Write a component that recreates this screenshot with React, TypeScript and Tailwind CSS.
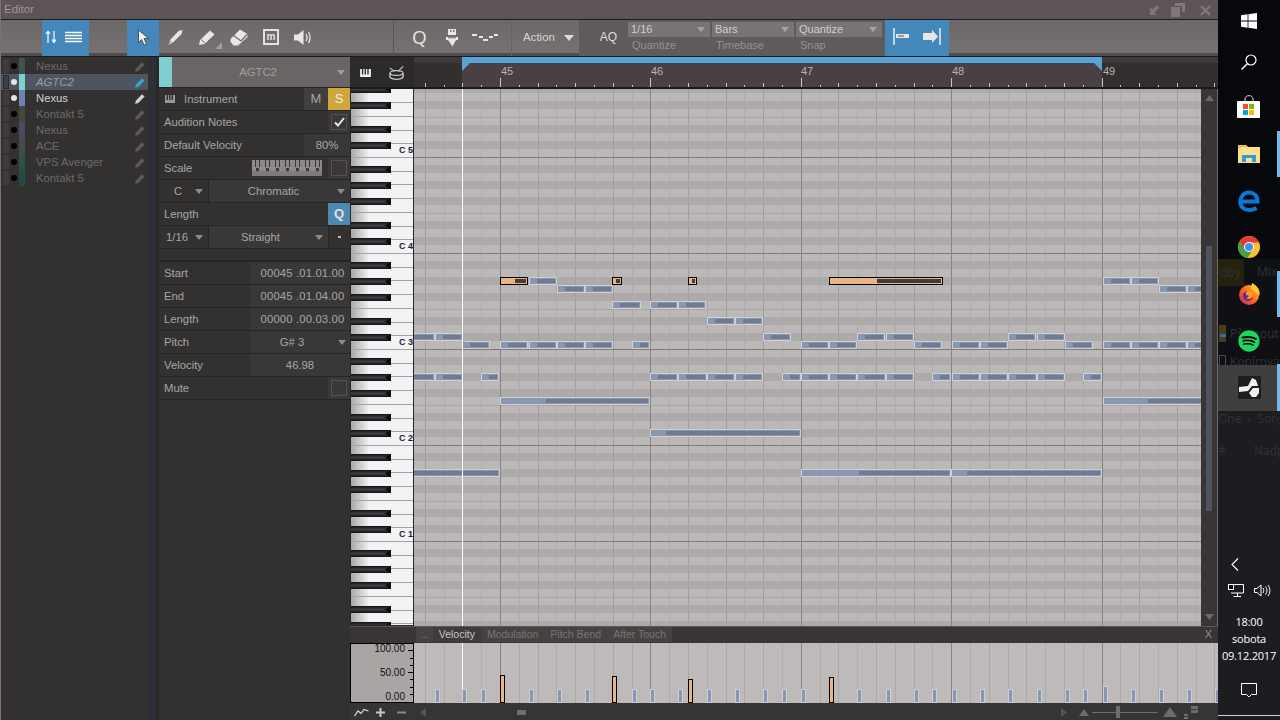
import React from "react";
import { FaSpotify } from "react-icons/fa";

const F = "font-['Liberation_Sans',Arial,sans-serif]";

type N = [number, number, number, number?];
// y, x, w, light width
const notes: N[] = [
  [277, 529, 28], [277, 1103, 28], [277, 1131, 28],
  [285, 557, 28], [285, 585, 28], [285, 1159, 28], [285, 1187, 28],
  [301, 612, 29], [301, 650, 28], [301, 678, 28],
  [317, 707, 28], [317, 735, 28],
  [333, 405, 30, 0], [333, 435, 28], [333, 763, 28], [333, 857, 28], [333, 886, 28], [333, 1008, 28], [333, 1037, 28],
  [341, 462, 28], [341, 500, 28], [341, 529, 28], [341, 557, 28], [341, 585, 28], [341, 632, 18], [341, 801, 28], [341, 829, 28], [341, 914, 28], [341, 952, 28], [341, 980, 28], [341, 1065, 28], [341, 1103, 28], [341, 1131, 28], [341, 1159, 28], [341, 1187, 28],
  [373, 405, 30, 0], [373, 435, 28], [373, 481, 18], [373, 650, 28], [373, 678, 29], [373, 707, 28], [373, 735, 28], [373, 782, 19], [373, 801, 28], [373, 829, 28], [373, 857, 29], [373, 886, 28], [373, 932, 19], [373, 952, 28], [373, 980, 28], [373, 1008, 29], [373, 1037, 28], [373, 1083, 19],
  [397, 500, 150, 45], [397, 1103, 150, 44],
  [429, 650, 151, 15],
  [469, 405, 95, 0], [469, 801, 150, 57], [469, 951, 151, 15],
];
const orange: N[] = [
  [277, 500, 28, 14], [277, 612, 10, 3], [277, 688, 9, 3], [277, 829, 114, 47],
];

const octaves = [61, 157, 253, 349, 445, 541, 637];
const darkRows = octaves.flatMap((l) => [8, 24, 40, 64, 80].map((d) => l + d)).filter((y) => y >= 81 && y < 625);
const efLines = octaves.map((l) => l + 56).filter((y) => y > 89 && y < 625);
const cLines = octaves.filter((y) => y > 89 && y < 625);
const ticks: { x: number; k: number; bar: number }[] = [];
for (let i = -4; i < 42; i++) {
  const x = Math.round(500 + 18.8 * i);
  const bar = ((i % 8) + 8) % 8 === 0 ? 2 : ((i % 2) + 2) % 2 === 0 ? 1 : 0;
  ticks.push({ x, k: i, bar });
}
const whiteLines: number[] = [];
for (let k = -5; k < 40; k++) {
  const y = Math.round(157 + (96 / 7) * k);
  if (y > 89 && y < 626) whiteLines.push(y);
}
const starts = [435, 462, 481, 500, 529, 557, 585, 612, 632, 650, 678, 688, 707, 735, 763, 782, 801, 829, 857, 886, 914, 932, 952, 980, 1008, 1037, 1065, 1083, 1103, 1131, 1159, 1187, 1215];
const orangeVel: Record<number, number> = { 500: 28, 612: 27, 688: 24, 829: 26 };

function Tri({ c = "#8f8b8b", w = 10, h = 6, className = "" }: { c?: string; w?: number; h?: number; className?: string }) {
  return (
    <svg width={w} height={h} viewBox="0 0 10 6" className={className} preserveAspectRatio="none">
      <path d="M0 0H10L5 6Z" fill={c} />
    </svg>
  );
}

function Pencil({ c }: { c: string }) {
  return (
    <svg width="10" height="11" viewBox="0 0 10 11">
      <path d="M0 11L1 7.5 7 1.2 9.6 3.6 3.4 10Z" fill={c} />
    </svg>
  );
}

function Track({ name, color, active, sel }: { name: string; color: string; active?: boolean; sel?: boolean }) {
  return (
    <div className={`flex h-4 items-center ${sel ? "bg-[#4f5560]" : ""}`}>
      <div className={`ml-[2px] h-[14px] w-[6px] ${sel ? "border border-[#2b2a2a] bg-[#3b3f47]" : "bg-[#3d3b3b]"}`} />
      <div className={`ml-[2px] h-[6px] w-[6px] rounded-full ${active ? "bg-[#e4e4e4]" : "bg-black"}`} />
      <div className="ml-[2px] h-4 w-[6px]" style={{ background: color }} />
      <div className={`ml-[11px] flex-1 text-[11.3px] ${sel ? "italic text-[#9a9ea6]" : active ? "text-[#d2d2d2]" : "text-[#6c6968]"}`}>{name}</div>
      <div className="mr-[3px]">
        <Pencil c={sel ? "#35a3cc" : active ? "#d0d0d0" : "#5e5b5a"} />
      </div>
    </div>
  );
}

function Row({ children, h = "h-[23px]" }: { children: React.ReactNode; h?: string }) {
  return <div className={`flex ${h} items-stretch border-b border-[#272524] text-[11.3px] text-[#a6a6a6]`}>{children}</div>;
}
function Label({ children }: { children: React.ReactNode }) {
  return <div className="flex flex-1 items-center pl-[5px]">{children}</div>;
}
function Val({ children, w, tri, extra = "" }: { children?: React.ReactNode; w: string; tri?: boolean; extra?: string }) {
  return (
    <div className={`relative flex ${w} items-center justify-center bg-[#3a3837] ${tri ? "pr-[16px]" : ""} ${extra}`}>
      {children}
      {tri && <Tri className="absolute right-[4px] top-[9px]" w={8} h={5} />}
    </div>
  );
}
function Check({ on }: { on?: boolean }) {
  return (
    <div className="flex w-[22px] items-center justify-center bg-[#3a3837]">
      <div className="flex h-4 w-4 items-center justify-center border border-[#545150]">
        {on && (
          <svg width="11" height="10" viewBox="0 0 11 10">
            <path d="M1 5.5L4 8.5 10 1" fill="none" stroke="#e8e8e8" strokeWidth="2" />
          </svg>
        )}
      </div>
    </div>
  );
}

function Drop({ v, l, w }: { v: string; l: string; w: string }) {
  return (
    <div className={`flex ${w} flex-col`}>
      <div className="flex h-[15px] items-center justify-between bg-[#797474] pl-[3px] pr-[5px] text-[11px] text-[#d0cdcd]">
        {v}
        <Tri c="#a7a3a3" w={8} h={5} />
      </div>
      <div className="pl-[4px] text-[11px] text-[#969191]">{l}</div>
    </div>
  );
}

function Tool({ children, w = "w-8", blue }: { children: React.ReactNode; w?: string; blue?: boolean }) {
  return <div className={`flex ${w} items-center justify-center pb-[2px] ${blue ? "bg-[#4488bb]" : ""}`}>{children}</div>;
}

function Toolbar() {
  const c = "#e6e6e6";
  return (
    <div className={`flex h-[37px] shrink-0 border-b border-[#1c1a1a] bg-linear-to-b from-[#6d6868] to-[#777373] shadow-[inset_0_-3px_0_#514d4d] ${F}`}>
      <div className="ml-[41px] flex w-[47px] items-center gap-[8px] bg-[#4488bb] pb-[2px] pl-[3px]">
        <svg width="12" height="14" viewBox="0 0 12 14"><path d="M3 13V2M1 4L3 1.500 5 4M9 1V12M7 9.500L9 12.500 11 9.500" fill="none" stroke="#fff" strokeWidth="1.200" /></svg>
        <svg width="17" height="12" viewBox="0 0 17 12"><path d="M0 1.500H17M0 4.500H17M0 7.500H17M0 10.500H17" stroke="#fff" strokeWidth="1.600" /></svg>
      </div>
      <div className="w-[38px]" />
      <Tool blue>
        <svg width="13" height="17" viewBox="0 0 13 17"><path d="M1.500 1V13.500L4.500 10.500 7 16 9.500 15 7 9.500H11.500Z" fill="#f0f0f0" stroke="#3b3b3b" strokeWidth="0.800" /></svg>
      </Tool>
      <Tool>
        <svg width="17" height="17" viewBox="0 0 16 17"><path d="M0.500 16.500L3 10.500 11 2 15 1 14 5 6 13Z" fill={c} /><path d="M0.500 16.500L4 12" stroke="#6f6a6a" strokeWidth="0.800" /></svg>
      </Tool>
      <Tool>
        <div className="relative">
          <svg width="18" height="17" viewBox="0 0 18 17"><path d="M1 16L2 11 12 1.500 16.500 5.500 6.500 15Z" fill={c} /><path d="M3 10.500L7.500 14.500" stroke="#77716f" /></svg>
          <svg width="7" height="7" viewBox="0 0 7 7" className="absolute left-[17px] top-[13px]"><path d="M7 0V7H0Z" fill="#a09c9c" /></svg>
        </div>
      </Tool>
      <Tool>
        <svg width="18" height="17" viewBox="0 0 18 17"><path d="M0.500 10L10 0.500 17.500 5 17.500 8 8 16.500 3.500 16.500 0.500 13Z" fill={c} /><path d="M3.500 6.500L11 12 M11 12L17.500 5" fill="none" stroke="#6f6a6a" strokeWidth="1.200" /></svg>
      </Tool>
      <Tool>
        <div className="flex h-4 w-4 items-center justify-center border-2 border-[#e2e2e2] text-[10px] font-bold leading-none text-[#e2e2e2]">m</div>
      </Tool>
      <Tool>
        <svg width="20" height="17" viewBox="0 0 20 17"><path d="M1 5.500H5L10.500 1V16L5 11.500H1Z" fill={c} /><path d="M13 5C14.300 7 14.300 10 13 12M15.500 3C17.500 6 17.500 11 15.500 14" fill="none" stroke={c} strokeWidth="1.300" /></svg>
      </Tool>
      <div className="w-[75px] border-r border-[#5a5656]" />
      <Tool w="w-[51px]">
        <div className="font-['Open_Sans',sans-serif] text-[19px] font-medium leading-none text-[#e6e6e6]">Q</div>
      </Tool>
      <Tool w="w-[14px]">
        <svg width="14" height="19" viewBox="0 0 14 19" className="shrink-0"><path d="M3 1H11V7H3ZM1 9H13V12H11L7.500 18.500 3 12H1Z" fill={c} /><path d="M5 3H6.500M8 3H9.500" stroke="#555" strokeWidth="1.500" /><path d="M3 9.800H11" stroke="#6f6a6a" /></svg>
      </Tool>
      <Tool w="w-[52px]">
        <svg width="26" height="9" viewBox="0 0 26 9"><path d="M0 1H5V3H0ZM7 3H11V5H7ZM11 6H16V8H11ZM17 3H21V5H17ZM22 1H26V3H22Z" fill={c} /></svg>
      </Tool>
      <div className="flex w-[68px] items-center gap-[9px] border-l border-[#686363] pb-[1px] pl-[11px] text-[11.500px] text-[#d5d2d2]">
        Action
        <Tri c="#dcdcdc" w={10} h={6} />
      </div>
      <div className="flex w-[306px] bg-[#5f5b5b] pb-[3px]">
        <div className="flex w-[49px] items-center justify-end pr-[11px] text-[12px] text-[#dedede]">AQ</div>
        <div className="flex gap-[2px] pt-[2px]">
          <Drop v="1/16" l="Quantize" w="w-[82px]" />
          <Drop v="Bars" l="Timebase" w="w-[82px]" />
          <Drop v="Quantize" l="Snap" w="w-[86px]" />
        </div>
      </div>
      <div className="flex w-[64px] items-center justify-between bg-[#4488bb] px-[8px] pb-[3px]">
        <svg width="18" height="17" viewBox="0 0 18 17"><path d="M1 0V17" stroke="#e6e6e6" strokeWidth="1.600" /><path d="M3 6H16V10H3Z" fill="#e6e6e6" /><path d="M5 7.500H11V8.500H5Z" fill="#555" /></svg>
        <svg width="18" height="17" viewBox="0 0 18 17"><path d="M17 0V17" stroke="#e6e6e6" strokeWidth="1.600" /><path d="M0 5H9V2L15 8.500 9 15V12H0Z" fill="#e6e6e6" /></svg>
      </div>
      <div className="flex-1" />
    </div>
  );
}

function TitleBar() {
  const c = "#7f787b";
  return (
    <div className={`flex h-5 shrink-0 items-center justify-between border-b border-[#1c1a1a] bg-[#5e5458] pl-[3px] pr-[7px] pt-px text-[11.500px] text-[#9c9598] ${F}`}>
      Editor
      <div className="flex items-center gap-[12px]">
        <svg width="11" height="11" viewBox="0 0 11 11"><path d="M10.500 1.500L9 0 4.500 4.500 2 2V10H9L6.500 7.500 11 3Z" fill={c} /></svg>
        <svg width="14" height="14" viewBox="0 0 14 14"><path d="M4 0H14V9H11V3H4Z M0 4H9V14H0Z" fill={c} /></svg>
        <svg width="11" height="11" viewBox="0 0 11 11" className="ml-[3px]"><path d="M1 1L10 10M10 1L1 10" stroke={c} strokeWidth="2.400" /></svg>
      </div>
    </div>
  );
}

function TrackList() {
  return (
    <div className={`flex w-[147px] shrink-0 flex-col pt-px ${F}`}>
      <Track name="Nexus" color="#3f5350" />
      <Track name="AGTC2" color="#7fcfd0" active sel />
      <Track name="Nexus" color="#6c84b5" active />
      <Track name="Kontakt 5" color="#45483d" />
      <Track name="Nexus" color="#484c63" />
      <Track name="ACE" color="#434c46" />
      <Track name="VPS Avenger" color="#2f4f49" />
      <Track name="Kontakt 5" color="#224a4c" />
    </div>
  );
}

function ScaleKeys() {
  const groups = [0, 10, 20, 30, 40, 50, 60];
  return (
    <svg width="70" height="16" viewBox="0 0 70 16">
      <rect width="70" height="16" fill="#8d8989" />
      {groups.map((g) => (
        <g key={g}>
          <rect x={g + 3} y="0" width="1" height="7" fill="#3a3837" />
          <rect x={g + 7} y="0" width="1" height="7" fill="#3a3837" />
          <rect x={g + 4} y="8" width="3" height="3" fill="#3a3837" />
        </g>
      ))}
      <rect y="11" width="70" height="5" fill="#7f7b7b" />
    </svg>
  );
}

function Inspector() {
  return (
    <div className={`flex w-[191px] shrink-0 flex-col ${F}`}>
      <div className="flex h-[31px] items-stretch border-b border-[#272524]">
        <div className="w-[13px] bg-[#80cfd0]" />
        <div className="relative flex flex-1 items-center justify-center bg-[#6b6464] pr-[6px] text-[11.3px] text-[#a39d9d]">
          AGTC2
          <Tri c="#a29d9d" w={8} h={5} className="absolute right-[5px] top-[13px]" />
        </div>
      </div>
      <Row>
        <div className="flex flex-1 items-center pl-[6px]">
          <svg width="10" height="8" viewBox="0 0 10 8"><path d="M0 0H1.500V5H3V0H4V5H5.500V0H6.500V5H8V0H10V8H0Z" fill="#9a9797" /></svg>
          <span className="ml-[9px]">Instrument</span>
        </div>
        <div className="flex w-[24px] items-center justify-center bg-[#403e3e] text-[13px] text-[#a6a6a6]">M</div>
        <div className="flex w-[22px] items-center justify-center bg-[#cfa63c] text-[13px] text-[#eee]">S</div>
      </Row>
      <Row><Label>Audition Notes</Label><Check on /></Row>
      <Row><Label>Default Velocity</Label><Val w="w-[46px]">80%</Val></Row>
      <Row>
        <Label>Scale</Label>
        <div className="flex items-center pr-[6px]"><ScaleKeys /></div>
        <Check />
      </Row>
      <Row>
        <div className="relative flex w-[50px] items-center border-r border-[#272524] pl-[15px]">C<Tri w={8} h={5} className="absolute right-[5px] top-[9px]" /></div>
        <div className="relative flex flex-1 items-center justify-center bg-[#3a3837] pr-[12px]">Chromatic<Tri w={8} h={5} className="absolute right-[5px] top-[9px]" /></div>
      </Row>
      <Row>
        <Label>Length</Label>
        <div className="flex w-[22px] items-center justify-center bg-[#4f87b3] text-[13px] font-bold text-[#e2e2e2]">Q</div>
      </Row>
      <Row>
        <div className="relative flex w-[50px] items-center border-r border-[#272524] pl-[7px]">1/16<Tri w={8} h={5} className="absolute right-[5px] top-[9px]" /></div>
        <div className="relative flex flex-1 items-center justify-center bg-[#3a3837] pr-[16px]">Straight<Tri w={8} h={5} className="absolute right-[5px] top-[9px]" /></div>
        <div className="flex w-[22px] items-center justify-center border-l border-[#272524]"><div className="h-[2px] w-[3px] bg-[#bbb]" /></div>
      </Row>
      <div className="h-[13px] border-b-2 border-[#272524]" />
      <Row><Label>Start</Label><Val w="w-[100px]" extra="pl-[5px] tracking-[0.15px]">00045 .01.01.00</Val></Row>
      <Row><Label>End</Label><Val w="w-[100px]" extra="pl-[5px] tracking-[0.15px]">00045 .01.04.00</Val></Row>
      <Row><Label>Length</Label><Val w="w-[100px]" extra="pl-[5px] tracking-[0.15px]">00000 .00.03.00</Val></Row>
      <Row><Label>Pitch</Label><Val w="w-[100px]" tri>G# 3</Val></Row>
      <Row><Label>Velocity</Label><Val w="w-[100px]">46.98</Val></Row>
      <Row><Label>Mute</Label><Check /></Row>
    </div>
  );
}

function Ruler() {
  return (
    <div className={`flex h-8 shrink-0 border-b-2 border-[#1a1818] bg-[#2b2929] ${F}`}>
      <div className="flex h-[31px] w-[64px] items-start gap-[18px] pl-[10px] pt-[8px]">
        <svg width="11" height="9" viewBox="0 0 12 10" className="mt-[4px]"><path d="M0 0H2V6H3.500V0H5V6H6.500V0H8V6H9.500V0H12V9H0Z" fill="#eee" /></svg>
        <svg width="15" height="16" viewBox="0 0 16 16"><path d="M1 3L6 6M15 1L10 6" stroke="#c9c6c6" strokeWidth="1.200" /><ellipse cx="8" cy="8" rx="7" ry="2.500" fill="none" stroke="#c9c6c6" strokeWidth="1.200" /><path d="M1 8V12.500C3 15.500 13 15.500 15 12.500V8" fill="none" stroke="#c9c6c6" strokeWidth="1.500" /></svg>
      </div>
      <div className="relative flex-1 overflow-hidden bg-[#332f2f]">
        <div className="absolute left-0 right-0 top-0 h-[6px] bg-[#3d3a3a]" />
        <div className="absolute bottom-0 left-[48px] top-0 w-[640px] bg-[#4a4044]" />
        <div className="absolute left-[48px] top-0 h-[6px] w-[640px] bg-[#55a5d8]" />
        <svg width="8" height="8" viewBox="0 0 8 8" className="absolute left-[48px] top-[6px]"><path d="M0 0H8L0 8Z" fill="#55a5d8" /></svg>
        <svg width="8" height="8" viewBox="0 0 8 8" className="absolute left-[680px] top-[6px]"><path d="M0 0H8V8Z" fill="#55a5d8" /></svg>
        {ticks.map((t) => (
          <div
            key={t.k}
            className="absolute bottom-0 w-px bg-[#c9c6c6]"
            style={{ left: t.x - 414, height: t.bar === 2 ? 9 : t.bar === 1 ? 4 : 2 }}
          />
        ))}
        {[45, 46, 47, 48, 49].map((b, i) => (
          <div key={b} className="absolute top-[6px] text-[11px] text-[#b8b3b3]" style={{ left: [87, 237, 387, 538, 689][i] }}>{b}</div>
        ))}
      </div>
    </div>
  );
}

function Keys() {
  return (
    <div className="relative h-full w-[64px] shrink-0 overflow-hidden border-l border-r border-[#2a2828] bg-[#2b2929]">
      <svg width="62" height="536" viewBox="0 0 62 536" className="block">
        <defs>
          <linearGradient id="wk" x1="0" x2="1" y1="0" y2="0">
            <stop offset="0" stopColor="#a8a8a8" />
            <stop offset="0.3" stopColor="#f3f3f5" />
            <stop offset="1" stopColor="#f3f3f5" />
          </linearGradient>
          <linearGradient id="bk" x1="0" x2="0" y1="0" y2="1">
            <stop offset="0" stopColor="#101214" />
            <stop offset="0.5" stopColor="#3b3f42" />
            <stop offset="1" stopColor="#101214" />
          </linearGradient>
        </defs>
        <rect width="62" height="536" fill="url(#wk)" />
        {whiteLines.map((y) => (
          <rect key={y} x="0" y={y - 89} width="62" height="1" fill="#a3a3a3" />
        ))}
        {darkRows.map((y) => (
          <g key={y}>
            <rect x="0" y={y - 89 + 1} width="40" height="7" fill="url(#bk)" />
            <path d={`M34 ${y - 84.5}L40 ${y - 88}V${y - 81}Z`} fill="#0d0d0d" />
          </g>
        ))}
      </svg>
      {[["C 5", 144], ["C 4", 240], ["C 3", 336], ["C 2", 432], ["C 1", 528]].map(([t, y]) => (
        <div key={t} className={`absolute left-[48px] whitespace-nowrap text-[9px] font-bold leading-[13px] text-[#1d2430] ${F}`} style={{ top: (y as number) - 89 }}>{t}</div>
      ))}
    </div>
  );
}

function NoteBox({ n, o }: { n: N; o?: boolean }) {
  const [y, x, w, l = 7] = n;
  return (
    <div
      className={`absolute box-border h-2 border ${o ? "border-black bg-[#e9b585]" : "border-[#cdd0d6] bg-[#8a97b3]"}`}
      style={{ left: x - 414, top: y - 89, width: w }}
    >
      <div className={`absolute bottom-px right-px top-px ${o ? "bg-[#3e3c3c]" : "bg-[#727a90]"}`} style={{ left: l }} />
    </div>
  );
}

function Grid() {
  return (
    <div className="relative h-full flex-1 overflow-hidden bg-[#bdb8b8]">
      {ticks.filter((t) => t.bar === 0).map((t) => (
        <div key={t.k} className="absolute bottom-0 top-0 w-px bg-[#aeabab]" style={{ left: t.x - 414 }} />
      ))}
      {darkRows.map((y) => (
        <div key={y} className="absolute left-0 right-0 h-2 bg-[#aeaaaa]" style={{ top: y - 89 }} />
      ))}
      {efLines.map((y) => (
        <div key={y} className="absolute left-0 right-0 h-px bg-[#a9a6a6]" style={{ top: y - 89 }} />
      ))}
      {ticks.filter((t) => t.bar === 1).map((t) => (
        <div key={t.k} className="absolute bottom-0 top-0 w-px bg-[#a19e9e]" style={{ left: t.x - 414 }} />
      ))}
      {cLines.map((y) => (
        <div key={y} className="absolute left-0 right-0 h-px bg-[#7f7b7b]" style={{ top: y - 89 }} />
      ))}
      {ticks.filter((t) => t.bar === 2).map((t) => (
        <div key={t.k} className="absolute bottom-0 top-0 w-px bg-[#878383]" style={{ left: t.x - 414 }} />
      ))}
      {notes.map((n, i) => <NoteBox key={i} n={n} />)}
      {orange.map((n, i) => <NoteBox key={i} n={n} o />)}
      <div className="absolute bottom-0 left-[48px] top-0 w-px bg-white" />
    </div>
  );
}

function VScroll() {
  return (
    <div className="flex h-full w-[17px] shrink-0 flex-col items-center justify-between border-r border-[#6f6a6a] bg-[#393535] py-[6px]">
      <Tri c="#6d6969" w={9} h={6} className="rotate-180" />
      <div className="mb-[103px] mt-[145px] w-[6px] flex-1 bg-[#50535e]" />
      <Tri c="#6d6969" w={9} h={6} />
    </div>
  );
}

function Lane() {
  return (
    <div className="flex h-[60px] shrink-0">
      <div className={`relative h-full w-[64px] shrink-0 border border-black bg-[#a9a5a5] text-[10px] text-[#101010] ${F}`}>
        <div className="absolute right-[8px] top-[-2px] leading-[13px]">100.00</div>
        <div className="absolute right-[8px] top-[22px] leading-[13px]">50.00</div>
        <div className="absolute right-[8px] top-[46px] leading-[13px]">0.00</div>
        {[6, 14, 21, 28, 35, 43, 50].map((y) => (
          <div key={y} className={`absolute right-0 h-px bg-black ${y === 6 || y === 28 ? "w-[5px]" : "w-[3px]"}`} style={{ top: y }} />
        ))}
      </div>
      <div className="relative flex-1 overflow-hidden bg-[#bfbaba]">
        {ticks.map((t) => (
          <div
            key={t.k}
            className={`absolute bottom-0 top-0 w-px ${t.bar === 2 ? "bg-[#878383]" : t.bar === 1 ? "bg-[#a9a6a6]" : "bg-[#aeabab]"}`}
            style={{ left: t.x - 414 }}
          />
        ))}
        <div className="absolute bottom-0 left-[48px] top-0 w-px bg-white" />
        {starts.map((x) => {
          const o = orangeVel[x];
          return (
            <div
              key={x}
              className={`absolute bottom-0 box-border w-[5px] border ${o ? "border-black bg-[#e9b585]" : "border-[#cdd0d6] bg-[#8a97b3]"}`}
              style={{ left: x - 414, height: o || (x === 1103 ? 17 : 14) }}
            />
          );
        })}
      </div>
    </div>
  );
}

function Tabs() {
  const t = (s: string, a?: boolean, first?: boolean) => (
    <div className={`flex items-center ${first ? "px-[4px]" : "px-[6px]"} ${a ? "bg-[#3f3b3b] text-[#c4c7cc]" : "bg-[#464242] text-[#787474]"}`}>{s}</div>
  );
  return (
    <div className={`flex h-[17px] shrink-0 items-stretch border-t border-[#5a5656] bg-[#393535] pb-px pl-[66px] text-[10.5px] ${F}`}>
      <div className="flex">
        {t("...", false, true)}
        {t("Velocity", true)}
        {t("Modulation")}
        {t("Pitch Bend")}
        {t("After Touch")}
      </div>
      <div className="ml-auto pr-[6px] text-[11px] leading-[15px] text-[#8a8fa0]">X</div>
    </div>
  );
}

function BottomBar() {
  return (
    <div className={`flex h-[18px] shrink-0 items-center bg-[#363434] ${F}`}>
      <svg width="15" height="9" viewBox="0 0 15 9" className="ml-[4px]"><path d="M0.500 8L4 3 7 5.500 10 1.500 14.500 3" fill="none" stroke="#e0e0e0" strokeWidth="1.200" /></svg>
      <svg width="9" height="9" viewBox="0 0 9 9" className="ml-[7px]"><path d="M0 4.500H9M4.500 0V9" stroke="#c9c6c6" strokeWidth="2" /></svg>
      <svg width="9" height="9" viewBox="0 0 9 9" className="ml-[12px]"><path d="M0 4.500H9" stroke="#8c8888" strokeWidth="2" /></svg>
      <svg width="6" height="9" viewBox="0 0 6 9" className="ml-[14px]"><path d="M6 0V9L0 4.500Z" fill="#565353" /></svg>
      <div className="ml-[91px] h-[5px] w-[9px] bg-[#6b6e78]" />
      <svg width="6" height="9" viewBox="0 0 6 9" className="ml-[535px]"><path d="M0 0V9L6 4.500Z" fill="#565353" /></svg>
      <svg width="10" height="7" viewBox="0 0 10 7" className="ml-[12px]"><path d="M0 7H10L5 0Z" fill="#6f6c6c" /></svg>
      <div className="relative ml-[3px] h-px w-[66px] bg-[#6f6c6c]">
        <div className="absolute left-[24px] top-[-6px] h-3 w-[4px] bg-[#6f6c6c]" />
      </div>
      <svg width="14" height="10" viewBox="0 0 14 10" className="ml-[5px]"><path d="M0 10H14L7 0Z" fill="#6f6c6c" /></svg>
      <svg width="14" height="13" viewBox="0 0 14 13" className="ml-[7px]"><path d="M7 0H14V3H7ZM7 4H14V7H7ZM0 8H4V10H0ZM0 11H4V13H0Z" fill="#6f6c6c" /></svg>
    </div>
  );
}

function TaskCell({ children, h = "h-[46.700px]", bar }: { children: React.ReactNode; h?: string; bar?: boolean }) {
  return (
    <div className={`relative flex ${h} items-center justify-center`}>
      {children}
      {bar && <div className="absolute bottom-0 right-0 top-0 w-[3px] bg-[#76b9ed]" />}
    </div>
  );
}

function Taskbar() {
  const ghost = "absolute whitespace-nowrap text-[12px] text-[#303236]";
  return (
    <div className="relative flex w-[62px] shrink-0 flex-col overflow-hidden bg-[#07080b] font-['Open_Sans',sans-serif] text-white">
      <div className="absolute inset-x-0 bottom-0 top-[410px] bg-[#1c1d20]" />
      <div className="absolute left-0 top-[259px] h-[27px] w-[26px] bg-[#24220f]" />
      <div className="absolute left-[26px] right-0 top-[259px] h-[150px] bg-[#0f1013]" />
      <div className="absolute left-0 top-[286px] h-[80px] w-[26px] bg-[#0f1013]" />
      <div className={`${ghost} left-[2px] top-[264px] text-[#6e6e3c]`}>dby</div>
      <div className={`${ghost} left-[39px] top-[263px]`}>Mix</div>
      <div className="absolute left-[1px] top-[325px] h-[17px] w-[7px] bg-[#4a3d14]" />
      <div className="absolute left-[2px] top-[334px] h-[3px] w-[6px] bg-[#2f6fb0]" />
      <div className="absolute left-[1px] top-[355px] h-[11px] w-[7px] border border-[#4c4c4c]" />
      <div className={`${ghost} left-[12px] top-[325px] text-[#63656a]`}>Přemout</div>
      <div className={`${ghost} left-[12px] top-[353px] text-[#63656a]`}>Kopírovat</div>
      <div className="absolute inset-x-0 top-[365px] h-[46px] bg-[#3f3f3f]" />
      <div className={`${ghost} left-0 top-[410px] text-[#8e9094]`}>One &nbsp;› &nbsp;Song</div>
      <div className={`${ghost} left-[36px] top-[442px] text-[#3e4044]`}>Nadp</div>
      <div className={`${ghost} left-0 top-[442px] text-[#3e4044]`}>#</div>

      <div className="relative flex flex-col">
        <TaskCell h="h-[40px]">
          <svg width="16" height="16" viewBox="0 0 16 16" className="mt-[2px]"><path d="M0 2.300L6.600 1.300V7.600H0ZM7.400 1.200L16 0V7.600H7.400ZM0 8.400H6.600V14.700L0 13.700ZM7.400 8.400H16V16L7.400 14.800Z" fill="#fff" /></svg>
        </TaskCell>
        <TaskCell h="h-[44px]">
          <svg width="16" height="16" viewBox="0 0 16 16"><circle cx="10" cy="6" r="5" fill="none" stroke="#fff" strokeWidth="1.200" /><path d="M6.500 9.500L0.500 15.500" stroke="#fff" strokeWidth="1.400" /></svg>
        </TaskCell>
        <TaskCell>
          <svg width="24" height="24" viewBox="0 0 24 24"><path d="M8 6V4C8 -0.500 16 -0.500 16 4V6" fill="none" stroke="#d8d8d8" strokeWidth="1" /><rect y="6" width="23" height="17" rx="1" fill="#fff" /><rect x="6" y="9" width="5" height="5" fill="#f25022" /><rect x="12" y="9" width="5" height="5" fill="#7fba00" /><rect x="6" y="15" width="5" height="5" fill="#00a4ef" /><rect x="12" y="15" width="5" height="5" fill="#ffb900" /></svg>
        </TaskCell>
        <TaskCell bar>
          <svg width="22" height="18" viewBox="0 0 22 18"><path d="M0 0H8L10 2H22V18H0Z" fill="#fde08a" /><path d="M0 0H8L10 2H3V3H0Z" fill="#e9c04f" /><path d="M4 17V10H18V17H14V13H8V17Z" fill="#2f9ee0" /></svg>
        </TaskCell>
        <TaskCell>
          <svg width="22" height="22" viewBox="0 0 22 22"><path d="M4 11.500H19.500C19.500 5.500 15.500 2.500 11 2.500 6 2.500 2.500 6.500 2.200 11.500 2.200 17 6 20 11 20 14 20 16.500 19.300 18.500 18" fill="none" stroke="#0a78d7" strokeWidth="4" /></svg>
        </TaskCell>
        <TaskCell>
          <svg width="22" height="22" viewBox="0 0 22 22">
            <circle cx="11" cy="11" r="11" fill="#fbc02d" />
            <path d="M11 0A11 11 0 0 0 1.500 5.500L6.500 13 11 6.500H21A11 11 0 0 0 11 0Z" fill="#e53935" />
            <path d="M1.500 5.500A11 11 0 0 0 9.500 22L14 14.500 6.500 13Z" fill="#43a047" />
            <circle cx="11" cy="11" r="5" fill="#fff" />
            <circle cx="11" cy="11" r="4" fill="#4a8cf0" />
          </svg>
        </TaskCell>
        <TaskCell bar>
          <svg width="22" height="22" viewBox="0 0 22 22">
            <defs><linearGradient id="ff" x1="1" x2="0" y1="0" y2="1"><stop offset="0" stopColor="#ffcb2e" /><stop offset="0.5" stopColor="#ff6a1a" /><stop offset="1" stopColor="#c0206c" /></linearGradient></defs>
            <circle cx="11" cy="12" r="10" fill="url(#ff)" />
            <circle cx="10" cy="13" r="5" fill="#5b2a9a" />
            <path d="M14 0C20 3 23 8 21 13 18 8 15 8 13 5Z" fill="#ffcb2e" />
            <path d="M8 9C12 6 16 9 15 13 14 16 10 17 8 15 11 15 12 12 8 12Z" fill="#ff9a1f" />
          </svg>
        </TaskCell>
        <TaskCell>
          <div className="relative flex h-[22px] w-[22px] items-center justify-center rounded-full bg-black">
            <FaSpotify size={22} color="#1ed760" />
          </div>
        </TaskCell>
        <TaskCell bar>
          <div className="flex h-[23px] w-[23px] items-center justify-center bg-[#1e1e1e]">
            <svg width="21" height="20" viewBox="0 0 21 20"><path d="M0 10L9 9 13 1 17 3 19 9 13 9 9 14 0 15Z M20 11L14 11 10 16 13 20 17 20 20 16Z" fill="#f0f0f0" /></svg>
          </div>
        </TaskCell>
      </div>

      <div className="relative mt-[147px] flex flex-col items-center">
        <svg width="8" height="13" viewBox="0 0 8 13" className="mr-[28px]"><path d="M7 0.500L1 6.500 7 12.500" fill="none" stroke="#fff" strokeWidth="1.100" /></svg>
        <div className="mt-[13px] flex items-center gap-[10px]">
          <svg width="16" height="13" viewBox="0 0 16 13"><path d="M3 0.500H15.500V9H3M9.500 9V12M5.500 12.500H13" fill="none" stroke="#fff" /><rect x="0.500" y="0.500" width="5" height="5" fill="#07080b" stroke="#fff" /></svg>
          <svg width="17" height="13" viewBox="0 0 17 13"><path d="M0.500 4.500H3L7 1V12L3 8.500H0.500Z" fill="none" stroke="#fff" /><path d="M9 4C10 5.500 10 7.500 9 9M11.500 2.500C13.500 5 13.500 8 11.500 10.500M14 1C16.500 4.500 16.500 8.500 14 12" fill="none" stroke="#fff" /></svg>
        </div>
        <div className="mt-[16px] text-center text-[11px] leading-[17px] tracking-[-0.2px]">18:00<br />sobota<br />09.12.2017</div>
        <svg width="16" height="15" viewBox="0 0 16 15" className="mt-[19px]"><path d="M0.500 0.500H15.500V11.500H10.500L8 14 5.500 11.500H0.500Z" fill="none" stroke="#fff" /></svg>
      </div>
      <div className="absolute bottom-[4px] left-0 right-0 h-px bg-[#d0d0d0]" />
    </div>
  );
}

export default function App() {
  return (
    <div className={`flex h-[720px] w-[1280px] overflow-hidden bg-[#333130] ${F}`}>
      <div className="flex w-[1218px] shrink-0 flex-col border-l border-[#7a7075]">
        <TitleBar />
        <Toolbar />
        <div className="flex min-h-0 flex-1 bg-[#333130]">
          <TrackList />
          <div className="w-[8px] shrink-0 bg-[#2d2f34]" />
          <div className="w-[3px] shrink-0 bg-[#292727]" />
          <Inspector />
          <div className="flex min-w-0 flex-1 flex-col">
            <Ruler />
            <div className="flex h-[537px] shrink-0">
              <Keys />
              <Grid />
              <VScroll />
            </div>
            <Tabs />
            <Lane />
            <BottomBar />
          </div>
        </div>
      </div>
      <Taskbar />
    </div>
  );
}
